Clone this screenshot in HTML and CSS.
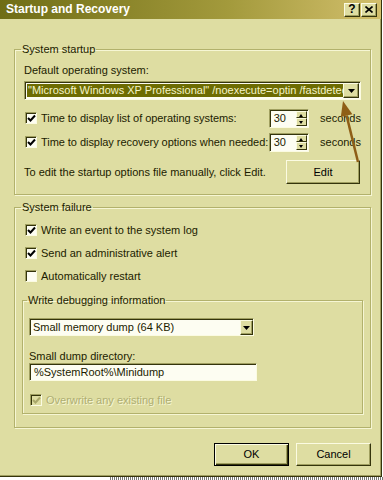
FILE: index.html
```html
<!DOCTYPE html>
<html lang="en">
<head>
    <meta charset="UTF-8">
    <title>Startup and Recovery</title>
    <link rel="stylesheet" href="styles.css">
</head>
<body>

<div class="window">
    <div class="titlebar">
        <span class="title">Startup and Recovery</span>
        <div class="cap-btns">
            <span class="cap-btn">?</span>
            <span class="cap-btn">
                <svg width="8" height="7" viewBox="0 0 8 7"><path d="M0.5 0.5 L7.5 6.5 M7.5 0.5 L0.5 6.5" stroke="#000" stroke-width="1.6"/></svg>
            </span>
        </div>
    </div>

    <div class="content">
        <!-- startup group -->
        <fieldset class="group startup">
            <legend>System startup</legend>
            <div class="field-label first">Default operating system:</div>
            <div class="combo os-combo">
                <span class="combo-text selected">"Microsoft Windows XP Professional" /noexecute=optin /fastdetect</span>
                <span class="combo-btn"><svg width="7" height="4" viewBox="0 0 7 4"><path d="M0 0 H7 L3.5 4 Z" fill="#000"/></svg></span>
            </div>

            <div class="row timer-row first-timer">
                <span class="check checked"><svg width="9" height="9" viewBox="0 0 9 9"><path d="M1 4 L3.5 6.5 L8 1.5" stroke="#000" stroke-width="2" fill="none"/></svg></span>
                <span class="row-label">Time to display list of operating systems:</span>
                <span class="spin"><span class="spin-val">30</span><span class="spin-btns"><span class="spin-up"></span><span class="spin-down"></span></span></span>
                <span class="unit">seconds</span>
            </div>
            <div class="row timer-row">
                <span class="check checked"><svg width="9" height="9" viewBox="0 0 9 9"><path d="M1 4 L3.5 6.5 L8 1.5" stroke="#000" stroke-width="2" fill="none"/></svg></span>
                <span class="row-label">Time to display recovery options when needed:</span>
                <span class="spin"><span class="spin-val">30</span><span class="spin-btns"><span class="spin-up"></span><span class="spin-down"></span></span></span>
                <span class="unit">seconds</span>
            </div>

            <div class="edit-row">
                <span>To edit the startup options file manually, click Edit.</span>
                <button class="btn edit-btn">Edit</button>
            </div>
        </fieldset>

        <!-- failure group -->
        <fieldset class="group failure">
            <legend>System failure</legend>
            <div class="row check-row first-check">
                <span class="check checked"><svg width="9" height="9" viewBox="0 0 9 9"><path d="M1 4 L3.5 6.5 L8 1.5" stroke="#000" stroke-width="2" fill="none"/></svg></span>
                <span>Write an event to the system log</span>
            </div>
            <div class="row check-row">
                <span class="check checked"><svg width="9" height="9" viewBox="0 0 9 9"><path d="M1 4 L3.5 6.5 L8 1.5" stroke="#000" stroke-width="2" fill="none"/></svg></span>
                <span>Send an administrative alert</span>
            </div>
            <div class="row check-row">
                <span class="check"></span>
                <span>Automatically restart</span>
            </div>

            <fieldset class="group debug">
                <legend>Write debugging information</legend>
                <div class="combo dump-combo">
                    <span class="combo-text">Small memory dump (64 KB)</span>
                    <span class="combo-btn"><svg width="7" height="4" viewBox="0 0 7 4"><path d="M0 0 H7 L3.5 4 Z" fill="#000"/></svg></span>
                </div>
                <div class="field-label dir-label">Small dump directory:</div>
                <div class="textbox">%SystemRoot%\Minidump</div>
                <div class="row check-row disabled">
                    <span class="check"><svg width="9" height="9" viewBox="0 0 9 9"><path d="M1 4 L3.5 6.5 L8 1.5" stroke="#a9a86a" stroke-width="2" fill="none"/></svg></span>
                    <span>Overwrite any existing file</span>
                </div>
            </fieldset>
        </fieldset>

        <div class="buttons">
            <button class="btn default">OK</button>
            <button class="btn">Cancel</button>
        </div>
    </div>

    <!-- callout arrow pointing at the combo button -->
    <svg class="callout" width="383" height="480" viewBox="0 0 383 480">
        <line x1="358" y1="162" x2="346.6" y2="115.6" stroke="#8e5e16" stroke-width="2.5"/>
        <polygon points="343,101 352.4,114.2 340.8,117" fill="#8e5e16"/>
    </svg>
</div>
<div class="strip"></div>

</body>
</html>
```

FILE: styles.css
```css
* {
    box-sizing: border-box;
}
body {
    margin: 0;
    background: #fff;
    font-family: "Liberation Sans", Arial, sans-serif;
    font-size: 11px;
    line-height: 13px;
    color: #1c1c00;
}
.window {
    position: relative;
    width: 382px;
    height: 477px;
    background: #dedda2;
    border-right: 1px solid #34340c;
    border-bottom: 1px solid #34340c;
    box-shadow: inset -1px -1px 0 #a09f60;
    display: flex;
    flex-direction: column;
}
.titlebar {
    height: 19px;
    background: linear-gradient(to right, #6f6d16, #a39a3c 60%, #d2bf6c);
    display: flex;
    align-items: center;
    justify-content: space-between;
    padding: 0 4px 0 6px;
}
.title {
    color: #fff;
    font-weight: bold;
    font-size: 12px;
}
.cap-btns {
    display: flex;
    gap: 1px;
}
.cap-btn {
    width: 16px;
    height: 14px;
    background: #dedda2;
    border: 1px solid;
    border-color: #fbfbe2 #34340c #34340c #fbfbe2;
    box-shadow: inset -1px -1px 0 #a09f60;
    display: flex;
    align-items: center;
    justify-content: center;
    font-weight: bold;
    font-size: 12px;
    color: #000;
}
.content {
    padding: 0 10px 0 14px;
}
.group {
    margin: 0;
    border: 1px solid #b2b16c;
    box-shadow: 1px 1px 0 #f6f6d4, inset 1px 1px 0 #f6f6d4;
    min-width: 0;
}
.group legend {
    padding: 0 1px;
}
.startup {
    margin-top: 24px;
    padding: 0 9px 10px 9px;
}
.startup legend {
    margin-left: -3px;
}
.field-label.first {
    margin-top: 4px;
    height: 20px;
    line-height: 20px;
}
.combo {
    display: flex;
    align-items: stretch;
    background: #fdfdf2;
    border: 1px solid;
    border-color: #a09f60 #fbfbe2 #fbfbe2 #a09f60;
    box-shadow: inset 1px 1px 0 #34340c;
    padding: 2px;
}
.os-combo {
    margin-top: 1px;
    height: 19px;
}
.combo-text {
    flex: 1;
    overflow: hidden;
    white-space: nowrap;
    padding-left: 1px;
    line-height: 13px;
}
.combo-text.selected {
    background: #6d6c02;
    color: #f4f4c8;
}
.combo-btn {
    width: 16px;
    background: #dedda2;
    border: 1px solid;
    border-color: #fbfbe2 #34340c #34340c #fbfbe2;
    box-shadow: inset -1px -1px 0 #a09f60;
    display: flex;
    align-items: center;
    justify-content: center;
    margin: -1px -1px -1px 0;
}
.row {
    display: flex;
    align-items: center;
    white-space: nowrap;
}
.check {
    width: 12px;
    height: 12px;
    flex: none;
    background: #fdfdf2;
    border: 1px solid;
    border-color: #a09f60 #fbfbe2 #fbfbe2 #a09f60;
    box-shadow: inset 1px 1px 0 #34340c;
    display: flex;
    align-items: center;
    justify-content: center;
    margin-left: 1px;
    margin-right: 4px;
}
.check svg {
    margin: 1px 0 0 1px;
}
.timer-row {
    height: 20px;
    margin-top: 4px;
}
.timer-row.first-timer {
    margin-top: 8px;
}
.row-label {
    width: 232px;
    letter-spacing: -0.05px;
}
.spin {
    width: 41px;
    height: 19px;
    display: flex;
    background: #fdfdf2;
    border: 1px solid;
    border-color: #a09f60 #fbfbe2 #fbfbe2 #a09f60;
    box-shadow: inset 1px 1px 0 #34340c;
    padding: 1px 1px 1px 2px;
}
.spin-val {
    flex: 1;
    line-height: 15px;
    padding-left: 2px;
}
.spin-btns {
    width: 11px;
    display: flex;
    flex-direction: column;
}
.spin-up, .spin-down {
    flex: 1;
    position: relative;
    background: #dedda2;
    border: 1px solid;
    border-color: #fbfbe2 #34340c #34340c #fbfbe2;
}
.spin-up::after, .spin-down::after {
    content: "";
    position: absolute;
    left: 2px;
    top: 2px;
    border-left: 2.5px solid transparent;
    border-right: 2.5px solid transparent;
}
.spin-up::after {
    border-bottom: 3px solid #000;
}
.spin-down::after {
    border-top: 3px solid #000;
}
.unit {
    margin-left: 11px;
}
.edit-row {
    display: flex;
    align-items: center;
    justify-content: space-between;
    margin-top: 8px;
}
.btn {
    width: 75px;
    height: 23px;
    background: #dedda2;
    font: inherit;
    color: #000;
    border: 1px solid;
    border-color: #fbfbe2 #34340c #34340c #fbfbe2;
    box-shadow: inset -1px -1px 0 #a09f60;
    padding: 0;
}
.edit-btn {
    width: 74px;
    height: 24px;
    margin-right: 1px;
}
.failure {
    margin-top: 6px;
    padding: 0 7px 13px 7px;
}
.failure > legend {
    margin-left: -1px;
}
.check-row {
    height: 16px;
    margin-top: 7px;
    padding-left: 2px;
}
.check-row.first-check {
    margin-top: 8px;
}
.debug {
    margin-top: 10px;
    padding: 0 6px 5px 6px;
}
.debug legend {
    margin-left: -2px;
}
.dump-combo {
    margin-top: 11px;
    width: 225px;
    height: 18px;
    padding: 2px 1px 1px 2px;
}
.dump-combo .combo-btn {
    width: 13px;
}
.dir-label {
    margin-top: 14px;
}
.textbox {
    width: 228px;
    height: 18px;
    background: #fdfdf2;
    border: 1px solid;
    border-color: #a09f60 #fbfbe2 #fbfbe2 #a09f60;
    box-shadow: inset 1px 1px 0 #34340c;
    padding: 2px 4px;
    white-space: nowrap;
}
.disabled {
    margin-top: 11px;
    padding-left: 0;
    color: #aeae72;
    text-shadow: 1px 1px 0 #f6f6d4;
}
.disabled .check {
    background: #dedda2;
}
.buttons {
    display: flex;
    justify-content: flex-end;
    gap: 7px;
    margin-top: 15px;
}
.btn.default {
    border: 1px solid #000;
    box-shadow: inset 1px 1px 0 #fbfbe2, inset -1px -1px 0 #34340c, inset -2px -2px 0 #a09f60;
}
.callout {
    position: absolute;
    top: 0;
    left: 0;
    pointer-events: none;
}
.strip {
    height: 3px;
    margin-left: 110px;
    background: repeating-linear-gradient(to right, #777 0 1px, #fff 1px 2px);
}
```
